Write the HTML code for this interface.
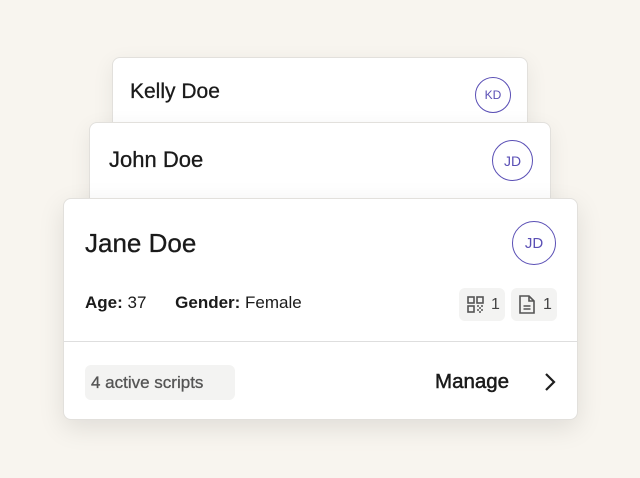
<!DOCTYPE html>
<html><head><style>
*{margin:0;padding:0;box-sizing:border-box}
body{width:640px;height:478px;background:#f8f5ef;font-family:"Liberation Sans",sans-serif;position:relative;overflow:hidden;color:#1a1a1a}
.card{position:absolute;background:#fff;border:1px solid #e2e0dc;border-radius:8px;box-shadow:0 6px 22px rgba(0,0,0,0.07)}
.av{position:absolute;border:1.3px solid #5a4fb5;border-radius:50%;color:#5a4fb5;display:flex;align-items:center;justify-content:center;font-weight:500}
.name{position:absolute;font-weight:500;-webkit-text-stroke:0.3px #1a1a1a}
.badge{position:absolute;background:#f3f3f2;border-radius:6px;display:flex;align-items:center;font-size:16px;color:#444}
</style></head><body>
<div class="card" style="left:112px;top:57px;width:416px;height:80px">
 <div class="name" style="left:17px;top:22px;font-size:21px">Kelly Doe</div>
 <div class="av" style="left:362px;top:19px;width:36px;height:36px;font-size:12px">KD</div>
</div>
<div class="card" style="left:89px;top:122px;width:462px;height:90px">
 <div class="name" style="left:19px;top:24px;font-size:22px">John Doe</div>
 <div class="av" style="left:402px;top:17px;width:41px;height:41px;font-size:14px">JD</div>
</div>
<div class="card" style="left:63px;top:198px;width:515px;height:222px;box-shadow:0 8px 26px rgba(0,0,0,0.1)">
 <div class="name" style="left:21px;top:29px;font-size:26px">Jane Doe</div>
 <div class="av" style="left:448px;top:22px;width:44px;height:44px;font-size:15px">JD</div>
 <div style="position:absolute;left:21px;top:94px;font-size:17px"><b style="font-weight:600">Age:</b> 37 <span style="display:inline-block;width:24px"></span><b style="font-weight:600">Gender:</b> Female</div>
 <div class="badge" style="left:395px;top:89px;width:46px;height:33px;padding-left:8px">
  <svg width="17" height="17" viewBox="0 0 17 17" fill="none" stroke="#555" stroke-width="1.6"><rect x="1" y="1" width="6" height="6"/><rect x="10" y="1" width="6" height="6"/><rect x="1" y="10" width="6" height="6"/><path d="M10 10h2M14 10h2M12 12h2M10 14h2M14 14h2M12 16h2" stroke-width="1.4"/></svg>
  <span style="margin-left:7px">1</span></div>
 <div class="badge" style="left:447px;top:89px;width:46px;height:33px;padding-left:8px">
  <svg width="16" height="19" viewBox="0 0 16 19" fill="none" stroke="#555" stroke-width="1.6"><path d="M1 1h9l5 5v12H1z"/><path d="M10 1v5h5M4.5 11h7M4.5 14h7"/></svg>
  <span style="margin-left:8px">1</span></div>
 <div style="position:absolute;left:0;right:0;top:142px;border-top:1px solid #dedede"></div>
 <div class="badge" style="left:21px;top:166px;width:150px;height:35px;padding-left:6px;font-size:17px;color:#555;font-weight:500;-webkit-text-stroke:0.3px #555">4 active scripts</div>
 <div style="position:absolute;left:371px;top:171px;font-size:20.5px;font-weight:500;-webkit-text-stroke:0.5px #1a1a1a">Manage</div>
 <svg style="position:absolute;left:479px;top:173px" width="14" height="20" viewBox="0 0 14 20" fill="none" stroke="#1f1f1f" stroke-width="2.2"><path d="M3 2l8 8-8 8"/></svg>
</div>
</body></html>
